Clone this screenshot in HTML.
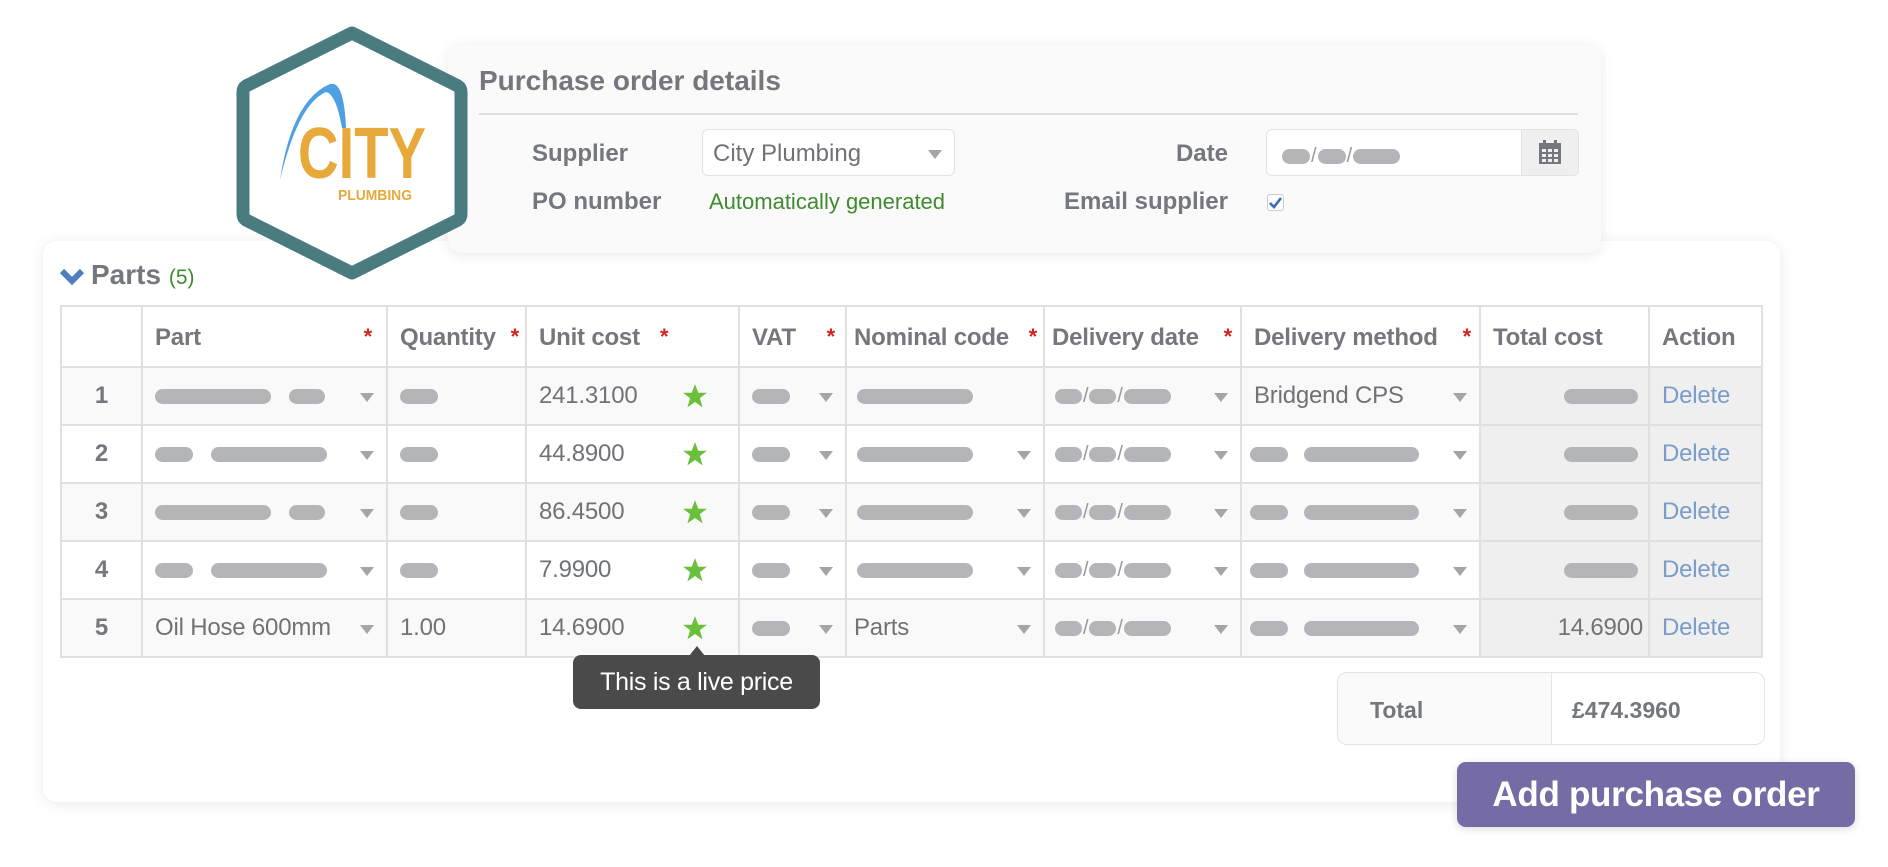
<!DOCTYPE html>
<html><head><meta charset="utf-8">
<style>
*{box-sizing:border-box;margin:0;padding:0}
body{width:1888px;height:867px;background:#fff;font-family:"Liberation Sans",sans-serif;position:relative;overflow:hidden;color:#6f7378}
.card{position:absolute;background:#fafafa;border-radius:14px;box-shadow:0 2px 14px rgba(0,0,0,0.09)}
.b{font-weight:bold;color:#74787e}
.pill{display:inline-block;height:15px;border-radius:8px;background:#b3b5b8;vertical-align:middle}
.car{position:absolute;width:0;height:0;border-left:7px solid transparent;border-right:7px solid transparent;border-top:9px solid #a3a5a8;top:50%;margin-top:-3px}
table{position:absolute;left:60px;top:305px;border-collapse:collapse;table-layout:fixed}
td,th{border:2px solid #e0e0e0;position:relative;height:58px;font-size:24px;text-align:left;padding:0 0 0 12px;white-space:nowrap;letter-spacing:-0.2px}
th{height:61px;background:#fff;font-weight:bold;color:#74787e;padding-top:2px}
th .r{color:#d0261f;position:absolute;top:17px;font-size:22px}
tbody tr:nth-child(odd) td{background:#f9f9f9}
tbody tr:nth-child(even) td{background:#fff}
tbody tr td.g{background:#efefef}
td.n{text-align:center;font-weight:bold;color:#74787e;padding:0}
.del{color:#7b9cc9}
.star{position:absolute;left:155px;top:15px}
.sl{display:inline-block;vertical-align:middle;color:#999;font-size:20px;margin:0 1px}
</style></head><body>

<!-- bottom card -->
<div class="card" style="left:43px;top:241px;width:1737px;height:561px;background:#fff;"></div>

<!-- top card -->
<div class="card" style="left:448px;top:45px;width:1153px;height:208px;"></div>
<div class="b" style="position:absolute;left:479px;top:65px;font-size:28px;">Purchase order details</div>
<div style="position:absolute;left:479px;top:113px;width:1099px;height:2px;background:#dedede"></div>
<div class="b" style="position:absolute;left:532px;top:140px;font-size:24px;">Supplier</div>
<div style="position:absolute;left:702px;top:129px;width:253px;height:47px;background:#fff;border:1px solid #e2e2e2;border-radius:6px;font-size:24px;padding:10px 0 0 10px;">City Plumbing<span class="car" style="right:12px;"></span></div>
<div class="b" style="position:absolute;left:532px;top:188px;font-size:24px;">PO number</div>
<div style="position:absolute;left:709px;top:189px;font-size:22px;color:#3f8a2e;">Automatically generated</div>
<div class="b" style="position:absolute;right:660px;top:140px;font-size:24px;">Date</div>
<div style="position:absolute;left:1266px;top:129px;width:313px;height:47px;background:#fff;border:1px solid #e2e2e2;border-radius:6px;padding:15px 0 0 15px;">
<span class="pill" style="width:28px"></span><span class="sl">/</span><span class="pill" style="width:28px"></span><span class="sl">/</span><span class="pill" style="width:47px"></span>
<div style="position:absolute;right:0;top:0;width:57px;height:45px;background:#efefef;border-left:1px solid #e2e2e2;border-radius:0 6px 6px 0">
<svg width="22" height="24" viewBox="0 0 22 24" style="position:absolute;left:17px;top:10px"><rect x="0" y="3" width="22" height="21" fill="#74787e"/><rect x="4" y="0" width="3" height="5" fill="#74787e"/><rect x="15" y="0" width="3" height="5" fill="#74787e"/><g fill="#efefef"><rect x="3" y="9" width="4" height="3"/><rect x="9" y="9" width="4" height="3"/><rect x="15" y="9" width="4" height="3"/><rect x="3" y="14" width="4" height="3"/><rect x="9" y="14" width="4" height="3"/><rect x="15" y="14" width="4" height="3"/><rect x="3" y="19" width="4" height="3"/><rect x="9" y="19" width="4" height="3"/><rect x="15" y="19" width="4" height="3"/></g></svg></div></div>
<div class="b" style="position:absolute;right:660px;top:188px;font-size:24px;">Email supplier</div>
<div style="position:absolute;left:1267px;top:194px;width:17px;height:17px;border:1px solid #ccc;border-radius:3px;background:#fff">
<svg width="15" height="15" viewBox="0 0 15 15" style="position:absolute;left:0;top:0"><path d="M2 8 L6 12 L13 3" stroke="#3d6bb3" stroke-width="2.6" fill="none"/></svg></div>

<!-- hexagon -->
<svg width="240" height="260" style="position:absolute;left:232px;top:20px" viewBox="0 0 240 260">
<path d="M120 13 L226 66 Q229 68 229 72 L229 194 Q229 198 226 200 L120 253 L14 200 Q11 198 11 194 L11 72 Q11 68 14 66 Z" fill="#fff" stroke="#4a7c7f" stroke-width="13" stroke-linejoin="round"/>
<path d="M48 160 Q60 80 98 64 Q112 60 114 108 L110 108 Q104 74 94 72 Q66 84 48 160 Z" fill="#4f9fe3"/>
<text x="66" y="158" font-family="Liberation Sans" font-weight="bold" font-size="72" fill="#e6a93a" textLength="128" lengthAdjust="spacingAndGlyphs">CITY</text>
<text x="106" y="180" font-family="Liberation Sans" font-weight="bold" font-size="15" fill="#e6a93a" textLength="74" lengthAdjust="spacingAndGlyphs">PLUMBING</text>
</svg>

<svg width="24" height="18" style="position:absolute;left:60px;top:268px" viewBox="0 0 24 18"><path d="M2 3 L12 13 L22 3" stroke="#4f7fc0" stroke-width="6" fill="none"/></svg>
<div class="b" style="position:absolute;left:91px;top:259px;font-size:28px;">Parts <span style="font-weight:normal;color:#3f8a2e;font-size:21px">(5)</span></div>

<table>
<colgroup><col style="width:81px"><col style="width:245px"><col style="width:139px"><col style="width:213px"><col style="width:107px"><col style="width:198px"><col style="width:197px"><col style="width:239px"><col style="width:169px"><col style="width:113px"></colgroup>
<thead><tr><th></th><th>Part<span class="r" style="right:14px">*</span></th><th>Quantity<span class="r" style="right:6px">*</span></th><th>Unit cost<span class="r" style="left:133px">*</span></th><th>VAT<span class="r" style="right:10px">*</span></th><th style="padding-left:7px">Nominal code<span class="r" style="right:6px">*</span></th><th style="padding-left:7px">Delivery date<span class="r" style="right:8px">*</span></th><th>Delivery method<span class="r" style="right:8px">*</span></th><th>Total cost</th><th>Action</th></tr></thead>
<tbody>
<tr><td class="n">1</td><td><span class="pill" style="width:116px"></span> <span class="pill" style="width:36px;margin-left:12px"></span><span class="car" style="right:12px"></span></td><td><span class="pill" style="width:38px"></span></td><td>241.3100<svg class="star" width="26" height="26" viewBox="0 0 24 24"><path d="M12 1 L15 9 L23 9 L16.5 14 L19 22.5 L12 17.5 L5 22.5 L7.5 14 L1 9 L9 9 Z" fill="#6cbf3c"/></svg></td><td><span class="pill" style="width:38px"></span><span class="car" style="right:12px"></span></td><td style="padding-left:10px"><span class="pill" style="width:116px"></span></td><td style="padding-left:10px"><span class="pill" style="width:27px"></span><span class="sl">/</span><span class="pill" style="width:27px"></span><span class="sl">/</span><span class="pill" style="width:47px"></span><span class="car" style="right:12px"></span></td><td>Bridgend CPS<span class="car" style="right:12px"></span></td><td class="g" style="text-align:right;padding-right:10px"><span class="pill" style="width:74px"></span></td><td class="g del">Delete</td></tr>
<tr><td class="n">2</td><td><span class="pill" style="width:38px"></span> <span class="pill" style="width:116px;margin-left:12px"></span><span class="car" style="right:12px"></span></td><td><span class="pill" style="width:38px"></span></td><td>44.8900<svg class="star" width="26" height="26" viewBox="0 0 24 24"><path d="M12 1 L15 9 L23 9 L16.5 14 L19 22.5 L12 17.5 L5 22.5 L7.5 14 L1 9 L9 9 Z" fill="#6cbf3c"/></svg></td><td><span class="pill" style="width:38px"></span><span class="car" style="right:12px"></span></td><td style="padding-left:10px"><span class="pill" style="width:116px"></span><span class="car" style="right:12px"></span></td><td style="padding-left:10px"><span class="pill" style="width:27px"></span><span class="sl">/</span><span class="pill" style="width:27px"></span><span class="sl">/</span><span class="pill" style="width:47px"></span><span class="car" style="right:12px"></span></td><td style="padding-left:8px"><span class="pill" style="width:38px"></span> <span class="pill" style="width:115px;margin-left:10px"></span><span class="car" style="right:12px"></span></td><td class="g" style="text-align:right;padding-right:10px"><span class="pill" style="width:74px"></span></td><td class="g del">Delete</td></tr>
<tr><td class="n">3</td><td><span class="pill" style="width:116px"></span> <span class="pill" style="width:36px;margin-left:12px"></span><span class="car" style="right:12px"></span></td><td><span class="pill" style="width:38px"></span></td><td>86.4500<svg class="star" width="26" height="26" viewBox="0 0 24 24"><path d="M12 1 L15 9 L23 9 L16.5 14 L19 22.5 L12 17.5 L5 22.5 L7.5 14 L1 9 L9 9 Z" fill="#6cbf3c"/></svg></td><td><span class="pill" style="width:38px"></span><span class="car" style="right:12px"></span></td><td style="padding-left:10px"><span class="pill" style="width:116px"></span><span class="car" style="right:12px"></span></td><td style="padding-left:10px"><span class="pill" style="width:27px"></span><span class="sl">/</span><span class="pill" style="width:27px"></span><span class="sl">/</span><span class="pill" style="width:47px"></span><span class="car" style="right:12px"></span></td><td style="padding-left:8px"><span class="pill" style="width:38px"></span> <span class="pill" style="width:115px;margin-left:10px"></span><span class="car" style="right:12px"></span></td><td class="g" style="text-align:right;padding-right:10px"><span class="pill" style="width:74px"></span></td><td class="g del">Delete</td></tr>
<tr><td class="n">4</td><td><span class="pill" style="width:38px"></span> <span class="pill" style="width:116px;margin-left:12px"></span><span class="car" style="right:12px"></span></td><td><span class="pill" style="width:38px"></span></td><td>7.9900<svg class="star" width="26" height="26" viewBox="0 0 24 24"><path d="M12 1 L15 9 L23 9 L16.5 14 L19 22.5 L12 17.5 L5 22.5 L7.5 14 L1 9 L9 9 Z" fill="#6cbf3c"/></svg></td><td><span class="pill" style="width:38px"></span><span class="car" style="right:12px"></span></td><td style="padding-left:10px"><span class="pill" style="width:116px"></span><span class="car" style="right:12px"></span></td><td style="padding-left:10px"><span class="pill" style="width:27px"></span><span class="sl">/</span><span class="pill" style="width:27px"></span><span class="sl">/</span><span class="pill" style="width:47px"></span><span class="car" style="right:12px"></span></td><td style="padding-left:8px"><span class="pill" style="width:38px"></span> <span class="pill" style="width:115px;margin-left:10px"></span><span class="car" style="right:12px"></span></td><td class="g" style="text-align:right;padding-right:10px"><span class="pill" style="width:74px"></span></td><td class="g del">Delete</td></tr>
<tr><td class="n">5</td><td>Oil Hose 600mm<span class="car" style="right:12px"></span></td><td>1.00</td><td>14.6900<svg class="star" width="26" height="26" viewBox="0 0 24 24"><path d="M12 1 L15 9 L23 9 L16.5 14 L19 22.5 L12 17.5 L5 22.5 L7.5 14 L1 9 L9 9 Z" fill="#6cbf3c"/></svg></td><td><span class="pill" style="width:38px"></span><span class="car" style="right:12px"></span></td><td style="padding-left:7px">Parts<span class="car" style="right:12px"></span></td><td style="padding-left:10px"><span class="pill" style="width:27px"></span><span class="sl">/</span><span class="pill" style="width:27px"></span><span class="sl">/</span><span class="pill" style="width:47px"></span><span class="car" style="right:12px"></span></td><td style="padding-left:8px"><span class="pill" style="width:38px"></span> <span class="pill" style="width:115px;margin-left:10px"></span><span class="car" style="right:12px"></span></td><td class="g" style="text-align:right;padding-right:5px">14.6900</td><td class="g del">Delete</td></tr>
</tbody></table>

<!-- tooltip -->
<div style="position:absolute;left:689px;top:646px;width:0;height:0;border-left:8px solid transparent;border-right:8px solid transparent;border-bottom:10px solid #4a4a4a"></div>
<div style="position:absolute;left:573px;top:655px;width:247px;height:54px;background:#4a4a4a;border-radius:8px;color:#fff;font-size:25px;text-align:center;line-height:54px;letter-spacing:-0.3px">This is a live price</div>

<!-- total -->
<div style="position:absolute;left:1337px;top:672px;width:428px;height:73px;border:1px solid #e2e2e2;border-radius:10px;background:#fafafa;overflow:hidden">
<div style="position:absolute;left:213px;top:0;width:214px;height:73px;background:#fff;border-left:1px solid #e6e6e6"></div>
<div class="b" style="position:absolute;left:32px;top:24px;font-size:23px">Total</div>
<div class="b" style="position:absolute;left:234px;top:24px;font-size:23px">£474.3960</div></div>

<div style="position:absolute;left:1457px;top:762px;width:398px;height:65px;background:#756ca5;border-radius:9px;color:#fff;font-weight:bold;font-size:35px;text-align:center;line-height:65px;letter-spacing:-0.3px;box-shadow:0 2px 8px rgba(0,0,0,0.15)">Add purchase order</div>
</body></html>
